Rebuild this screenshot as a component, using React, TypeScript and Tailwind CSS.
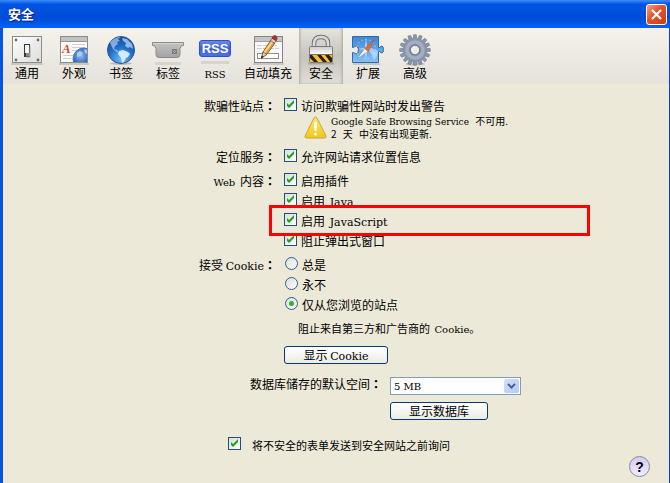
import React from 'react';

interface ToolbarItem {
  id: string;
  label: string;
  icon: React.ReactNode;
  wide?: boolean;
}

const SwitchIcon = () => (
  <svg width="32" height="32" viewBox="0 0 32 32" aria-hidden="true">
    <defs>
      <linearGradient id="plate" x1="0" y1="0" x2="1" y2="1">
        <stop offset="0" stopColor="#ffffff" />
        <stop offset="1" stopColor="#dcdcdc" />
      </linearGradient>
    </defs>
    <rect x="0" y="29" width="32" height="2" fill="#bdbab0" opacity="0.7" />
    <rect x="1.5" y="2.5" width="29" height="26" fill="url(#plate)" stroke="#8b8b88" />
    {[[5, 6], [27, 6], [5, 26], [27, 26]].map(([x, y]) => (
      <circle key={`${x}-${y}`} cx={x} cy={y} r="1.4" fill="#6f6f6f" />
    ))}
    <rect x="13" y="10" width="6" height="13" fill="#3a3633" />
    <rect x="14" y="11" width="4" height="8" fill="#f5f5f5" />
    <rect x="15" y="19" width="4" height="3" fill="#8f8c88" />
    <path d="M19 12v11h-4" fill="none" stroke="#a3a09a" />
  </svg>
);

const AppearanceIcon = () => (
  <svg width="32" height="32" viewBox="0 0 32 32" aria-hidden="true">
    <defs>
      <radialGradient id="ball" cx="0.35" cy="0.35" r="0.8">
        <stop offset="0" stopColor="#8fbdf0" />
        <stop offset="0.5" stopColor="#2a63b8" />
        <stop offset="1" stopColor="#0c2f78" />
      </radialGradient>
      <clipPath id="page">
        <rect x="3" y="7" width="26" height="21" />
      </clipPath>
    </defs>
    <rect x="1" y="29" width="30" height="2" fill="#bdbab0" opacity="0.7" />
    <rect x="2.5" y="2.5" width="27" height="26" fill="#fbfbfb" stroke="#8b8b88" />
    <rect x="3" y="3" width="26" height="4" fill="#c2c2c2" />
    <path d="M3 7.5h26" stroke="#969696" />
    <path d="M14 10.5h13M14 13.5h13M14 16.5h6M5 21.5h10M5 24.5h8" stroke="#cfcfcf" />
    <text x="4" y="19" fontFamily="Liberation Serif, serif" fontSize="13" fontWeight="bold" fontStyle="italic" fill="#e0401f">
      A
    </text>
    <g clipPath="url(#page)">
      <circle cx="26" cy="25" r="11" fill="url(#ball)" stroke="#4b79b5" />
      <path d="M19 19l3-2 3 2-2 3-4 1zM26 15l3 1v4l-2-1z" fill="#a9cdf2" />
    </g>
    <rect x="2.5" y="2.5" width="27" height="26" fill="none" stroke="#8b8b88" />
  </svg>
);

const GlobeIcon = () => (
  <svg width="32" height="32" viewBox="0 0 32 32" aria-hidden="true">
    <defs>
      <radialGradient id="globe" cx="0.5" cy="0.85" r="0.9">
        <stop offset="0" stopColor="#6dbcf8" />
        <stop offset="0.5" stopColor="#2470c8" />
        <stop offset="1" stopColor="#123f92" />
      </radialGradient>
    </defs>
    <ellipse cx="16" cy="29.5" rx="11" ry="1.5" fill="#bdbab0" />
    <circle cx="16" cy="16" r="13.5" fill="url(#globe)" stroke="#24579f" />
    <path d="M5 8q5-5 11-5l-3 2 2 2-3 1 1 2-3 2-1 3 3 1 2 3-2-1-4-3-2-4z" fill="#c3e2fb" opacity="0.6" />
    <path d="M17 4l5 1 5 5 1 5-3-2-2 1-3-2 1-3-3-2z" fill="#b5d9fa" opacity="0.75" />
    <path d="M14 17l4-1 5 2 2 2-2 3-2 1-2 4-2 1-1-5-3-4z" fill="#d9effd" opacity="0.95" />
  </svg>
);

const TabIcon = () => (
  <svg width="32" height="32" viewBox="0 0 32 32" aria-hidden="true">
    <defs>
      <linearGradient id="tab" x1="0" y1="0" x2="0" y2="1">
        <stop offset="0" stopColor="#c4c4c4" />
        <stop offset="1" stopColor="#a2a2a2" />
      </linearGradient>
    </defs>
    <path d="M3 29.5h26" stroke="#cfccc4" strokeWidth="3" opacity="0.7" />
    <path
      d="M0.5 8.5h31v3q-3 0-3.500 3v6q0 3-3 3h-18q-3 0-3-3v-6q-0.500-3-3.500-3z"
      fill="url(#tab)"
      stroke="#8c8c8c"
    />
    <path d="M1 9.500h30" stroke="#d2d2d2" />
    <path d="M20.500 15.500h4v4h-4zM20.500 15.500l4 4M24.500 15.500l-4 4" fill="none" stroke="#666666" strokeWidth="0.700" />
  </svg>
);

const RssIcon = () => (
  <svg width="32" height="32" viewBox="0 0 32 32" aria-hidden="true">
    <defs>
      <linearGradient id="rss" x1="0" y1="0" x2="0" y2="1">
        <stop offset="0" stopColor="#6d8ae8" />
        <stop offset="0.5" stopColor="#3f62dc" />
        <stop offset="1" stopColor="#4a70ee" />
      </linearGradient>
    </defs>
    <path d="M2 28.500h28" stroke="#cfccc4" strokeWidth="3" opacity="0.7" />
    <rect x="0.500" y="6.500" width="31" height="16" rx="2.500" fill="url(#rss)" stroke="#3150c8" />
    <text x="16" y="19" textAnchor="middle" fontFamily="Liberation Sans, sans-serif" fontSize="13" fontWeight="bold" fill="#ffffff">
      RSS
    </text>
  </svg>
);

const AutoFillIcon = () => (
  <svg width="32" height="32" viewBox="0 0 32 32" aria-hidden="true">
    <rect x="1" y="29" width="31" height="2" fill="#bdbab0" opacity="0.7" />
    <rect x="2.500" y="2.500" width="28" height="26" fill="#f8f8f8" stroke="#858585" />
    <rect x="3" y="3" width="27" height="4" fill="#c6c6c6" />
    <path d="M3 7.500h27" stroke="#a0a0a0" />
    <path d="M5 11.500h20M5 14.500h22" stroke="#cccccc" strokeDasharray="5 1" />
    <rect x="5.500" y="19.500" width="21" height="5" fill="#ffffff" stroke="#8d8d8d" />
    <path d="M9.500 24l1.500-6 8-12 4 3-8 11z" fill="#e8a13a" stroke="#6b4a22" strokeWidth="0.800" />
    <path d="M11.500 18.500l8.500-12 1.500 1-8.500 12z" fill="#fbd98a" />
    <path d="M9.500 24l1.500-6 4 2.500z" fill="#edc99a" stroke="#5a4226" strokeWidth="0.600" />
    <path d="M9 24.500l0.800-3 2 1.200z" fill="#222222" />
    <path d="M18.500 6.500l1.500-2.300 4 2.800-1.500 2.300z" fill="#d5d5dc" stroke="#4c4c55" strokeWidth="0.700" />
    <path d="M20 4q1-2.500 3-2.500 3 1 1.500 5z" fill="#c02e1c" stroke="#7d1a10" strokeWidth="0.700" />
  </svg>
);

const LockIcon = () => (
  <svg width="32" height="32" viewBox="0 0 32 32" aria-hidden="true">
    <defs>
      <linearGradient id="lock" x1="0" y1="0" x2="0" y2="1">
        <stop offset="0" stopColor="#c9c9cb" />
        <stop offset="0.5" stopColor="#ffffff" />
        <stop offset="1" stopColor="#b8b8b8" />
      </linearGradient>
      <clipPath id="band">
        <rect x="5" y="21" width="22" height="7" />
      </clipPath>
    </defs>
    <path d="M3 29.500h26" stroke="#8f8d87" strokeWidth="2" opacity="0.6" />
    <path d="M9 14V9.500q0-6.500 7-6.500t7 6.500V14" fill="none" stroke="#747474" strokeWidth="4.500" />
    <path d="M9 14V9.500q0-6.500 7-6.500t7 6.500V14" fill="none" stroke="#dadada" strokeWidth="2.600" />
    <rect x="4.500" y="12.500" width="23" height="16" rx="1" fill="url(#lock)" stroke="#7b7b7b" />
    <rect x="5" y="21" width="22" height="7" fill="#f9c035" />
    <g clipPath="url(#band)">
      <path d="M5 21h2l6 7h-4l-4-4zM12 21h4l6 7h-4zM20 21h4l4 4v4h-2z" fill="#2c2108" />
    </g>
    <path d="M5 20.500h22" stroke="#7c6f50" />
  </svg>
);

const ExtensionIcon = () => (
  <svg width="32" height="32" viewBox="0 0 32 32" aria-hidden="true">
    <defs>
      <linearGradient id="puzzle" x1="0" y1="0" x2="0" y2="1">
        <stop offset="0" stopColor="#3f86d4" />
        <stop offset="1" stopColor="#86c2f4" />
      </linearGradient>
    </defs>
    <path d="M1 30h27" stroke="#bdbab0" strokeWidth="2" opacity="0.7" />
    <path
      d="M0.500 2.500h26v11h1.500q0.500-1.500 2-1.500 1.500 0.500 1.500 3.500 0 3-1.500 3.500-1.500 0-2-1.500h-1.500v11h-26v-10h1q3 3 4.500 0 1.500-4-1-6-2-1-3.500 1h-1z"
      fill="url(#puzzle)"
      stroke="#2c6bb4"
    />
    <circle cx="14" cy="15" r="9.500" fill="none" stroke="#d5e9fc" strokeDasharray="1 3" />
    <path d="M14 3l1 11 8 1-8 1-1 11-1-11-7-1 7-1z" fill="#d7ebfd" opacity="0.85" />
    <path d="M17 17l3-2 6 2-1 5-3 4-2-5z" fill="#c5e2fa" opacity="0.7" />
    <path d="M22.500 5.500l-6.500 12-3.500-3z" fill="#ed6b2a" stroke="#b34818" strokeWidth="0.500" />
    <path d="M5 25l7.500-10.500 3.500 3z" fill="#f4f4f4" stroke="#6b7f98" strokeWidth="0.500" />
  </svg>
);

const GearIcon = () => (
  <svg width="32" height="32" viewBox="0 0 32 32" aria-hidden="true">
    <ellipse cx="16" cy="30" rx="10" ry="1.500" fill="#bdbab0" />
    {Array.from({ length: 16 }, (_, i) => (
      <path
        key={i}
        d="M14.200 5.500l0.500-4.800h2.600l0.500 4.800z"
        fill="#8c99ad"
        stroke="#69768a"
        strokeWidth="0.600"
        transform={`rotate(${(i * 360) / 16} 16 16)`}
      />
    ))}
    <circle cx="16" cy="16" r="11.500" fill="#8e9cb2" stroke="#77849a" strokeWidth="0.600" />
    <circle cx="16" cy="16" r="8" fill="none" stroke="#a3b0c3" strokeWidth="3" />
    <circle cx="16" cy="16" r="4.800" fill="#eeece6" stroke="#6a778c" strokeWidth="1.200" />
  </svg>
);

const toolbar: ToolbarItem[] = [
  { id: 'general', label: '通用', icon: <SwitchIcon /> },
  { id: 'appearance', label: '外观', icon: <AppearanceIcon /> },
  { id: 'bookmarks', label: '书签', icon: <GlobeIcon /> },
  { id: 'tabs', label: '标签', icon: <TabIcon /> },
  { id: 'rss', label: 'RSS', icon: <RssIcon /> },
  { id: 'autofill', label: '自动填充', icon: <AutoFillIcon />, wide: true },
  { id: 'security', label: '安全', icon: <LockIcon /> },
  { id: 'extensions', label: '扩展', icon: <ExtensionIcon /> },
  { id: 'advanced', label: '高级', icon: <GearIcon /> },
];

// Latin words use a slab serif next to the Chinese text
const Latin = ({ children, className = 'text-[11px]' }: { children: React.ReactNode; className?: string }) => (
  <span className={`font-['DejaVu_Serif',serif] leading-none ${className}`}>{children}</span>
);

const Colon = () => (
  <span className="font-['Noto_Sans_CJK_TC',sans-serif] leading-none font-bold">：</span>
);

const CheckBox = ({ id, children, small }: { id: string; children: React.ReactNode; small?: boolean }) => (
  <div className={`flex items-start ${small ? 'gap-[11px]' : 'gap-1'}`}>
    <span className="grid shrink-0">
      <input
        id={id}
        type="checkbox"
        defaultChecked
        className="peer [grid-area:1/1] size-[13px] appearance-none border border-[#1c5180] bg-linear-to-br from-[#dcdcd7] to-white"
      />
      <svg
        viewBox="0 0 13 13"
        className="pointer-events-none invisible [grid-area:1/1] size-[13px] peer-checked:visible"
        aria-hidden="true"
      >
        <path d="M3 5v3l2 2 5-5V2L5 7z" fill="#21a121" />
      </svg>
    </span>
    <label htmlFor={id} className={`leading-4 ${small ? 'text-[11px]' : ''}`}>
      {children}
    </label>
  </div>
);

const Radio = ({ id, children, checked }: { id: string; children: React.ReactNode; checked?: boolean }) => (
  <div className="flex items-start gap-1 pl-px">
    <span className="grid shrink-0">
      <input
        id={id}
        type="radio"
        name="cookies"
        defaultChecked={checked}
        className="peer [grid-area:1/1] size-[13px] appearance-none rounded-full border border-[#2d5f93] bg-linear-to-br from-[#dcdcd7] to-white"
      />
      <span className="pointer-events-none invisible [grid-area:1/1] size-[5px] place-self-center rounded-full bg-[#2fb32b] peer-checked:visible" />
    </span>
    <label htmlFor={id} className="leading-4">
      {children}
    </label>
  </div>
);

const Row = ({ label, children }: { label: React.ReactNode; children: React.ReactNode }) => (
  <div className="grid grid-cols-[273px_1fr] gap-2">
    <div className="text-right leading-4 whitespace-nowrap">
      {label}
      <Colon />
    </div>
    <div className="flex flex-col">{children}</div>
  </div>
);

const PushButton = ({ children, className }: { children: React.ReactNode; className: string }) => (
  <button
    type="button"
    className={`flex h-[18px] items-center justify-center rounded-[3px] border border-[#003c74] bg-linear-to-b from-white to-[#ecebe5] leading-4 ${className}`}
  >
    {children}
  </button>
);

const App: React.FC = () => {
  return (
    <div className="flex min-h-screen flex-col border-r border-l-3 border-r-[#0842c8] border-l-[#0855dd] bg-[#ece9d8] font-['Noto_Sans_CJK_SC',sans-serif] text-[12px] text-black">
      {/* Title bar */}
      <header className="-mr-px -ml-[3px] flex h-7 items-center justify-between bg-linear-to-b from-[#3c8cf8] via-[#0054e3] via-15% to-[#0046cf] pr-[3px] pl-2 shadow-[inset_0_-8px_6px_-3px_#0564fb]">
        <h1 className="text-[13px] leading-4 font-bold text-white [text-shadow:1px_1px_1px_#0a1883]">安全</h1>
        <button
          type="button"
          aria-label="关闭"
          className="flex size-[21px] items-center justify-center rounded-[3px] border border-white bg-linear-to-br from-[#f0a088] via-[#e4562f] via-40% to-[#c83a10]"
        >
          <svg width="13" height="13" viewBox="0 0 13 13" aria-hidden="true">
            <path d="M2 2l9 9M11 2l-9 9" stroke="#ffffff" strokeWidth="2.200" />
          </svg>
        </button>
      </header>

      {/* Toolbar */}
      <nav className="flex h-14 gap-[3px] bg-linear-to-b from-[#f4f2ea] to-[#e4e2db] pl-[2px]">
        {toolbar.map((item) => (
          <button
            key={item.id}
            type="button"
            aria-pressed={item.id === 'security'}
            className={`flex flex-col items-center pt-[6px] ${item.wide ? 'w-14' : 'w-11'} ${
              item.id === 'security'
                ? 'bg-linear-to-b from-[#e6e4dc] via-[#c6c4be] to-[#e0ded7] shadow-[inset_2px_0_3px_-1px_#aaa8a2,inset_-2px_0_3px_-1px_#aaa8a2]'
                : ''
            }`}
          >
            {item.icon}
            <span className="leading-[14px] whitespace-nowrap">
              {item.label === 'RSS' ? <Latin className="text-[10px]">RSS</Latin> : item.label}
            </span>
          </button>
        ))}
      </nav>

      <main className="flex flex-1 flex-col pt-[14px]">
        <Row label="欺骗性站点">
          <CheckBox id="fraud">访问欺骗性网站时发出警告</CheckBox>
          <div className="flex gap-1 pl-5">
            <svg width="23" height="23" viewBox="0 0 23 23" className="mt-[2px] shrink-0" aria-hidden="true">
              <defs>
                <linearGradient id="warn" x1="0" y1="0" x2="0" y2="1">
                  <stop offset="0" stopColor="#ffe86a" />
                  <stop offset="1" stopColor="#f2c714" />
                </linearGradient>
              </defs>
              <path
                d="M10 2q1.500-2 3 0l9 18q0.500 2-1.500 2h-18q-2 0-1.500-2z"
                fill="url(#warn)"
                stroke="#c9a646"
              />
              <path d="M10 6h3l-0.500 9h-2z" fill="#ffffff" />
              <circle cx="11.500" cy="18" r="1.600" fill="#ffffff" />
            </svg>
            <p className="text-[10px] leading-[13px]">
              <Latin className="mr-1 text-[9px]">Google Safe Browsing Service</Latin> 不可用.
              <br />
              <span className="mr-1">2</span> <span className="mr-1">天</span> 中没有出现更新.
            </p>
          </div>
        </Row>

        <div className="mt-[9px]">
          <Row label="定位服务">
            <CheckBox id="location">允许网站请求位置信息</CheckBox>
          </Row>
        </div>

        <div className="mt-2">
          <Row
            label={
              <>
                <Latin className="mr-[2px] text-[10px]">Web</Latin> 内容
              </>
            }
          >
            <div className="flex flex-col gap-1">
              <CheckBox id="plugins">启用插件</CheckBox>
              <CheckBox id="java">
                启用 <Latin className="ml-[2px] text-[11px]">Java</Latin>
              </CheckBox>
              <div className="relative">
                <CheckBox id="javascript">
                  启用 <Latin className="ml-[2px] text-[11px]">JavaScript</Latin>
                </CheckBox>
                <div className="pointer-events-none absolute -top-2 -left-[15px] z-10 h-[31px] w-[321px] border-3 border-[#ff0000]" />
              </div>
              <CheckBox id="popups">阻止弹出式窗口</CheckBox>
            </div>
          </Row>
        </div>

        <div className="mt-2">
          <Row
            label={
              <>
                接受 <Latin>Cookie</Latin>
              </>
            }
          >
            <div className="flex flex-col gap-1">
              <Radio id="always">总是</Radio>
              <Radio id="never">永不</Radio>
              <Radio id="visited" checked>
                仅从您浏览的站点
              </Radio>
            </div>
            <p className="mt-[7px] pl-[14px] text-[11px] leading-4">
              阻止来自第三方和广告商的 <Latin className="ml-[2px] text-[10px]">Cookie</Latin>。
            </p>
            <PushButton className="mt-[10px] w-[104px]">
              <span>
                显示 <Latin>Cookie</Latin>
              </span>
            </PushButton>
          </Row>
        </div>

        <div className="mt-[13px] grid grid-cols-[379px_1fr] gap-x-2 gap-y-[7px]">
          <label htmlFor="quota" className="text-right leading-[14px]">
            数据库储存的默认空间
            <Colon />
          </label>
          <span className="grid w-[131px]">
            <select
              id="quota"
              className="[grid-area:1/1] h-[18px] w-full appearance-none border border-[#7f9db9] bg-white pl-[3px] font-['DejaVu_Serif',serif] text-[10px]"
            >
              <option>5 MB</option>
            </select>
            <span className="pointer-events-none [grid-area:1/1] mr-[2px] flex h-[14px] w-[15px] items-center justify-center place-self-end self-center rounded-[2px] bg-linear-to-br from-[#d3e0fd] to-[#b0c8f6]">
              <svg width="9" height="6" viewBox="0 0 9 6" aria-hidden="true">
                <path d="M1 1l3.500 3.500L8 1" fill="none" stroke="#4d6185" strokeWidth="2" />
              </svg>
            </span>
          </span>
          <PushButton className="col-start-2 w-[98px]">显示数据库</PushButton>
        </div>

        <div className="mt-[17px] pl-[225px]">
          <CheckBox id="ask" small>
            将不安全的表单发送到安全网站之前询问
          </CheckBox>
        </div>

        <div className="mt-[3px] flex justify-end pr-[19px] pb-[6px]">
          <button
            type="button"
            aria-label="帮助"
            className="flex size-[21px] items-center justify-center rounded-full border border-[#8a8898] bg-linear-to-b from-[#d3caf2] to-[#f1edff] font-['Liberation_Sans',sans-serif] text-[14px] leading-none font-bold"
          >
            ?
          </button>
        </div>
      </main>
    </div>
  );
};

export default App;
